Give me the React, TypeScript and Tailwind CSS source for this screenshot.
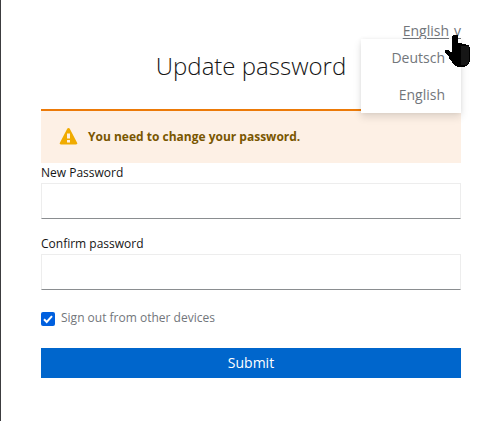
import React from 'react';

const locales = ['Deutsch', 'English'];

function LocaleMenu() {
  return (
    <div className="relative h-9 pt-5 text-right text-sm leading-[21px] text-[#72767b]">
      <a href="#" className="underline decoration-1 underline-offset-2">English</a>
      <a href="#" className="ml-[5px] inline-block underline decoration-1 underline-offset-2">v</a>

      <ul className="absolute right-0 top-[39px] z-10 h-[74px] w-[100px] bg-white shadow-[0_4px_8px_rgba(3,3,3,0.12),0_0_4px_rgba(3,3,3,0.06)]">
        {locales.map((locale) => (
          <li key={locale} className="h-[37px] px-4 pt-2">{locale}</li>
        ))}
      </ul>

      {/* Hand pointer over the language link */}
      <svg
        className="absolute -right-[9px] top-[35px] z-20"
        width="25"
        height="32"
        viewBox="0 0 25 32"
        shapeRendering="crispEdges"
      >
        <path
          fill="#000"
          d="M9 0h3l1 1v7h3l1 1h3l1 1h2l1 1v1h1v14l-1 1v2h-1v1h-1v1h-2v1h-8v-1h-2v-1l-2-1-1-2-2-2-1-3-2-2-1-2-2-1v-2h4l2 1v1h2V1z"
        />
        <path fill="#161616" d="M16 11h8v15l-1 1v2l-2 1h-5z" />
      </svg>
    </div>
  );
}

function PasswordField({ id, label }: { id: string; label: string }) {
  return (
    <div className="mb-[15px]">
      <label htmlFor={id} className="block h-5 text-xs leading-5 text-[#151515]">{label}</label>
      <input
        id={id}
        type="password"
        className="block h-9 w-full border border-[#ededed] border-b-[#8a8d90] bg-white px-2 outline-none"
      />
    </div>
  );
}

export default function App() {
  return (
    <div className="h-[421px] w-[500px] overflow-hidden border-l border-[#3c3c3f] bg-white pl-10 pr-[39px] font-['Open_Sans','Noto_Sans',sans-serif]">
      <LocaleMenu />

      <h1 className="h-[73px] pt-[14px] text-center text-2xl font-light leading-[32px] text-[#151515]">
        Update password
      </h1>

      <div className="flex h-[54px] items-center border-t-2 border-[#ec7a08] bg-[#fdf0e5] pl-[18px]">
        <svg className="mr-[9px]" width="20" height="18" viewBox="0 0 20 18">
          <path fill="#f0ab00" d="M9.500 0c.6 0 1 .3 1.300.8l7.300 14c.6 1-.1 1.700-1.200 1.700H2.100c-1.100 0-1.800-.7-1.200-1.700L8.200.8C8.500.3 8.900 0 9.500 0z" />
          <path fill="#fdf0e5" d="M8 5.500h3v5H8zM8 12h3v2.500H8z" />
        </svg>
        <span className="text-xs font-bold text-[#795600]">You need to change your password.</span>
      </div>

      <PasswordField id="password-new" label="New Password" />
      <PasswordField id="password-confirm" label="Confirm password" />

      <label className="mt-[18px] flex h-5 items-center text-xs text-[#72767b]">
        <span className="mr-[6px] mt-px flex size-[14px] items-center justify-center rounded-[2px] bg-[#0060df]">
          <svg width="14" height="14" viewBox="0 0 14 14">
            <path d="M3 7.300 5.700 10 11 4.200" fill="none" stroke="#fff" strokeWidth="2" />
          </svg>
        </span>
        Sign out from other devices
      </label>

      <button type="submit" className="mt-5 block h-[30px] w-full bg-[#06c] text-sm text-white">
        Submit
      </button>
    </div>
  );
}
